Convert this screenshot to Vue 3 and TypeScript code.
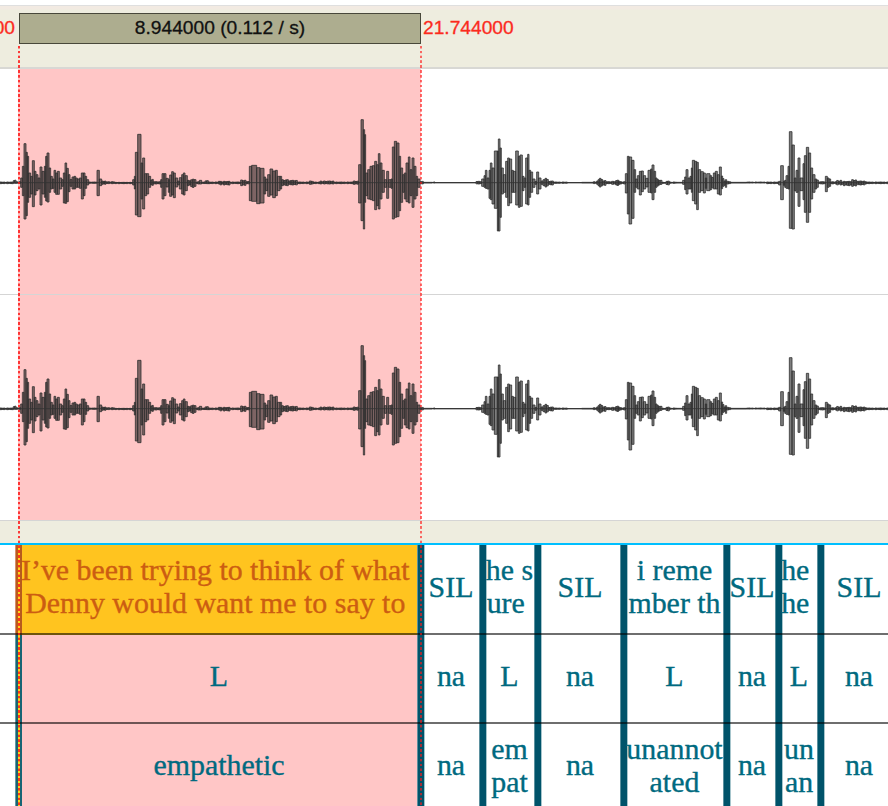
<script setup lang="ts">
interface Cell { text: string; selected?: boolean; shaded?: boolean }
interface Tier { id: string; cells: Cell[] }

const plain = (texts: string[]): Cell[] => texts.map((text) => ({ text }))

const tiers: Tier[] = [
  { id: 'words', cells: [{ text: 'I’ve been trying to think of what \nDenny would want me to say to ', selected: true }, ...plain(['SIL', 'he s\nure ', 'SIL', 'i reme\nmber th', 'SIL', 'he \nhe ', 'SIL'])] },
  { id: 'label', cells: [{ text: 'L', shaded: true }, ...plain(['na', 'L', 'na', 'L', 'na', 'L', 'na'])] },
  { id: 'tone', cells: [{ text: 'empathetic', shaded: true }, ...plain(['na', 'em\npat', 'na', 'unannot\nated', 'na', 'un\nan', 'na'])] },
]

// Each sample is "x:above,below" in thirds of a pixel; a block starts at its own offset.
const blocks: [number, string][] = [
  [0, '0:3,4 40:9,3 48:4,3 62:15,15 67:50,40 72:118,110 78:92,100 82:80,60 86:30,45 92:20,35 97:67,73 103:35,38 108:25,25 114:15,20 120:48,68 126:35,35 133:50,45 137:80,56 141:90,59 147:45,30 152:20,20 157:12,18 162:38,30 167:30,36 172:35,36 178:15,20 185:10,12 190:30,62 195:60,63 200:44,58 205:25,28 210:18,20 222:20,20 232:12,15 238:15,18 244:30,50 250:30,40 255:20,18 260:10,8 266:3,3 291:38,40 298:12,10 305:6,6 318:4,4 345:2,4 398:10,8 403:20,20 406:92,98 413:146,103 423:60,50 428:75,80 434:28,40 440:28,35 446:20,15 452:12,10 460:4,5 482:10,15 486:28,50 492:28,40 498:14,14 505:10,30 509:24,42 515:34,38 520:30,46 526:15,14 533:6,8 538:16,20 545:25,35 550:30,38 555:22,25 562:8,10 572:12,16 582:10,12 588:4,5 598:8,5 605:3,4 615:7,4 625:3,4 655:5,5'],
  [660, '0:5,8 30:3,4 62:9,10 78:5,5 88:50,55 95:53,57 110:46,64 120:44,62 132:18,35 137:12,25 143:25,42 150:42,38 158:36,46 166:38,40 172:20,25 180:20,20 185:10,10 205:8,8 232:3,4 268:6,6 280:3,4 300:6,5 342:3,4 400:6,6 416:55,62 423:190,115 430:160,140 434:145,60 437:30,40 443:40,50 450:50,52 457:52,55 464:65,82 470:55,70 475:88,80 480:60,50 486:38,30 493:10,15 500:35,48 506:10,15 513:12,18 517:108,110 523:125,105 530:120,103 537:80,85 542:45,60 548:25,30 553:30,50 558:60,58 565:78,62 570:40,40 576:75,75 582:50,50 588:20,40 593:12,15 600:5,5 610:2,2 636:3,2 645:1,1'],
  [1320, '0:1,1 108:5,5 125:12,12 132:22,15 136:38,18 141:15,20 147:38,48 151:60,52 156:45,65 163:96,78 172:96,146 175:132,146 180:105,105 184:45,35 190:25,30 197:65,45 203:75,70 208:72,62 215:38,30 220:35,30 227:96,68 235:80,75 240:84,72 247:20,25 252:15,15 257:75,65 263:86,68 267:38,45 272:33,30 278:12,15 285:5,6 290:33,35 296:15,20 303:10,10 315:14,14 325:6,8 340:3,3 382:1,1 425:2,2 460:4,4 470:10,10 478:14,14 488:8,10 498:4,4 515:5,6 527:9,10 540:4,5 556:28,32 562:80,95 567:78,125 575:68,108 582:40,30 587:12,15 592:22,20 598:35,38 604:36,28 610:22,20 617:14,14 624:38,30 632:42,32 636:54,52 642:35,30 647:15,15 655:8,8'],
  [1980, '0:8,6 6:2,3 18:6,8 28:3,3 50:2,2 68:8,6 74:18,22 78:40,35 84:15,20 90:20,20 94:45,30 97:68,55 104:65,65 110:62,82 115:40,30 122:34,25 130:30,32 136:15,18 140:28,25 150:22,22 160:30,20 166:35,20 172:25,35 178:48,38 184:22,20 192:10,15 200:5,5 212:2,2 260:3,2 320:3,4 356:5,8 362:52,52 370:8,15 378:22,18 384:50,20 388:154,138 396:114,140 403:15,25 408:38,30 414:75,72 420:15,25 429:58,52 433:82,90 439:107,120 446:90,90 452:45,50 458:25,30 465:12,20 475:4,5 496:20,28 502:15,15 512:4,5 530:8,8 545:5,10 575:10,12 590:6,8 620:3,4'],
]

const samples = blocks.flatMap(([offset, data]) =>
  data.split(' ').map((entry) => {
    const [x, levels] = entry.split(':')
    const [up, down] = levels.split(',').map(Number)
    return { x: Number(x) + offset, up, down }
  }),
)

const END = 2670
const ripple = [1, 0.8, 0.95, 0.6, 1, 0.75, 0.9]

const wave = samples
  .map((s, i) => {
    const next = samples[i + 1]?.x ?? END
    const level = Math.max(s.up, s.down)
    const quiet = level > 2 && level < 25
    const count = quiet ? Math.max(1, Math.round((next - s.x) / 5)) : 1
    const step = (next - s.x) / count
    let d = ''
    for (let k = 0; k < count; k++) {
      const gain = count > 1 ? ripple[(i + k) % ripple.length] : 1
      const x0 = (s.x + k * step).toFixed(1)
      const x1 = (s.x + (k + 1) * step).toFixed(1)
      const top = Math.max(s.up * gain - 1, 0).toFixed(1)
      const low = Math.max(s.down * gain - 1, 0).toFixed(1)
      d += `M${x0} -${top}H${x1}V${low}H${x0}Z`
    }
    return d
  })
  .join('')
</script>

<template>
  <main class="viewer">
    <header class="ruler">
      <span class="time start">00</span>
      <div class="interval">8.944000 (0.112 / s)</div>
      <span class="time end">21.744000</span>
    </header>

    <section v-for="channel in 2" :key="channel" class="channel">
      <svg class="wave" width="888" height="225" viewBox="0 -341 2664 675">
        <path :d="wave" />
        <line x1="0" x2="2664" y1="0" y2="0" />
      </svg>
    </section>

    <div class="divider"></div>

    <section class="tiers">
      <div v-for="tier in tiers" :key="tier.id" class="tier" :class="tier.id">
        <div
          v-for="(cell, i) in tier.cells"
          :key="i"
          class="cell"
          :class="{ selected: cell.selected, shaded: cell.shaded }"
        ><span>{{ cell.text }}</span></div>
      </div>
    </section>

    <i class="marker begin"></i>
    <i class="marker finish"></i>
  </main>
</template>

<style>
body {
  overflow: hidden;
  background: #fff;
}
</style>

<style scoped>
.viewer {
  position: relative;
  box-sizing: border-box;
  width: 888px;
  height: 806px;
  padding-top: 5px;
  overflow: hidden;
  background: #fff;
}

.ruler {
  box-sizing: border-box;
  display: flex;
  height: 64px;
  padding-top: 7px;
  border-top: 1px solid #dfdfdf;
  border-bottom: 2px solid #d8d8d4;
  background: linear-gradient(#f2eae2 0 3px, #eeeddf 4px);
  font: 19.2px/30px "Liberation Sans", Arial, sans-serif;
}

.time {
  color: #fb2b1d;
  white-space: nowrap;
  -webkit-text-stroke: 0.3px currentColor;
}

.start {
  display: flex;
  justify-content: flex-end;
  flex: 0 0 19px;
  box-sizing: border-box;
  min-width: 0;
  width: 19px;
  padding-right: 4px;
}

.end {
  padding-left: 2px;
}

.interval {
  box-sizing: border-box;
  flex: 0 0 402px;
  height: 31px;
  border: 1px solid #48483a;
  background: #adad8f;
  line-height: 28px;
  text-align: center;
  color: #111;
  -webkit-text-stroke: 0.3px currentColor;
}

.channel {
  box-sizing: border-box;
  height: 226px;
  border-bottom: 1px solid #d5d5d5;
  background: linear-gradient(90deg, #fff 18px, #ffc6c6 18px 421px, #fff 421px);
}

.wave {
  display: block;
}

.wave path {
  fill: rgba(20, 20, 20, 0.55);
  stroke: #303030;
  stroke-width: 2.4;
}

.wave line {
  stroke: #333;
  stroke-width: 2.5;
}

.divider {
  box-sizing: border-box;
  height: 24px;
  border-bottom: 2px solid #00bfff;
  background: #eeeddf;
}

.tiers {
  font: 29.9px/32.7px "Liberation Serif", "Times New Roman", serif;
  color: #006a80;
  -webkit-text-stroke: 0.35px currentColor;
}

.tier {
  position: relative;
  display: grid;
  grid-template-columns: 402px 62px 55px 86px 103px 52px 42px 78px;
  height: 89px;
  padding-left: 15px;
}

.words {
  height: 90px;
}

.tier::after {
  content: "";
  position: absolute;
  right: 0;
  bottom: 0;
  left: 0;
  height: 2px;
  background: rgba(0, 0, 0, 0.57);
}

.cell {
  display: flex;
  align-items: center;
  justify-content: center;
  box-sizing: border-box;
  min-width: 0;
  padding: 0 0 6px 6px;
  background: linear-gradient(90deg, #5b909e 1px, #00536a 1px 7px, #a6c5cc 7px 8px, transparent 8px);
  text-align: center;
  white-space: pre;
}

.shaded {
  background: linear-gradient(90deg, #629aa5 1px, #176474 1px 3px, #f5d91c 3px 5px, #176474 5px 7px, #ffc6c6 7px);
}

.selected {
  background: linear-gradient(90deg, #d78f6b 1px, #b85b1d 1px 3px, #ffd51c 3px 5px, #b85b1d 5px 7px, #ffc41f 7px);
  color: #cc5d12;
  -webkit-text-stroke-color: #cc5d12;
}

.marker {
  position: absolute;
  top: 46px;
  width: 2px;
  height: 760px;
  background: repeating-linear-gradient(rgba(255, 25, 25, 0.85) 0 2.3px, transparent 2.7px 4.55px, rgba(255, 25, 25, 0.85) 4.85px);
}

.begin {
  left: 18px;
}

.finish {
  left: 420px;
  opacity: 0.75;
}
</style>
